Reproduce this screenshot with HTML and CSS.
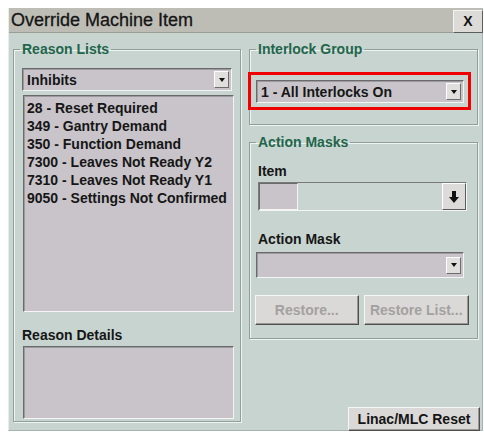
FILE: index.html
```html
<!DOCTYPE html>
<html lang="en">
<head>
<meta charset="utf-8">
<title>Override Machine Item</title>
<link rel="stylesheet" href="styles.css">
</head>
<body>
<div class="window">
  <div class="titlebar">
    <span class="title">Override Machine Item</span>
    <button class="close" type="button">X</button>
  </div>
  <div class="content">
    <fieldset class="group group-reasons">
      <legend>Reason Lists</legend>
      <div class="combo combo-inhibits">
        <span class="combo-value">Inhibits</span>
        <span class="drop"><span class="tri"></span></span>
      </div>
      <ul class="listbox">
        <li>28 - Reset Required</li>
        <li>349 - Gantry Demand</li>
        <li>350 - Function Demand</li>
        <li>7300 - Leaves Not Ready Y2</li>
        <li>7310 - Leaves Not Ready Y1</li>
        <li>9050 - Settings Not Confirmed</li>
      </ul>
      <div class="field-label details-label">Reason Details</div>
      <div class="details"></div>
    </fieldset>

    <div class="side">
      <fieldset class="group group-interlock">
        <legend>Interlock Group</legend>
        <div class="highlight">
          <div class="combo combo-interlock">
            <span class="combo-value">1 - All Interlocks On</span>
            <span class="drop"><span class="tri"></span></span>
          </div>
        </div>
      </fieldset>

      <fieldset class="group group-masks">
        <legend>Action Masks</legend>
        <div class="field-label item-label">Item</div>
        <div class="picker">
          <span class="picker-swatch"></span>
          <span class="picker-btn">
            <svg width="12" height="14" viewBox="0 0 12 14"><path d="M4 1h4v6h3l-5 6-5-6h3z" fill="#111"/></svg>
          </span>
        </div>
        <div class="field-label mask-label">Action Mask</div>
        <div class="combo combo-mask">
          <span class="combo-value"></span>
          <span class="drop"><span class="tri"></span></span>
        </div>
        <div class="btn-row">
          <button class="btn btn-disabled btn-restore" type="button">Restore...</button>
          <button class="btn btn-disabled btn-restore-list" type="button">Restore List...</button>
        </div>
      </fieldset>

      <button class="btn btn-reset" type="button">Linac/MLC Reset</button>
    </div>
  </div>
</div>
</body>
</html>
```

FILE: styles.css
```css
* { box-sizing: border-box; }

html, body {
  margin: 0;
  padding: 0;
  background: #ffffff;
}

body {
  font-family: "Liberation Sans", Arial, sans-serif;
  font-weight: bold;
  font-size: 14px;
  color: #161616;
}

.window {
  width: 475px;
  height: 423px;
  margin: 8px 0 0 8px;
  background: #c8d4d0;
  border-left: 1px solid #e6eeea;
  border-bottom: 1px solid #a7b3af;
  border-right: 1px solid #a7b3af;
  display: flex;
  flex-direction: column;
}

.titlebar {
  height: 25px;
  background: #bdbdb6;
  border-bottom: 1px solid #9c9c96;
  display: flex;
  align-items: center;
  justify-content: space-between;
  padding-left: 2px;
}

.title {
  font-weight: normal;
  font-size: 18px;
  color: #141414;
  -webkit-text-stroke: 0.3px #141414;
}

.close {
  width: 30px;
  height: 23px;
  margin-top: 2px;
  margin-right: -1px;
  padding: 0;
  font-family: "Liberation Sans", Arial, sans-serif;
  font-weight: bold;
  font-size: 14px;
  color: #111;
  background: #dcdbd8;
  border: 1px solid;
  border-color: #f4f4f2 #5c5c5a #5c5c5a #f4f4f2;
}

.content {
  flex: 1;
  display: flex;
  gap: 8px;
  padding: 8px 4px 0 4px;
}

/* etched group boxes */
.group {
  margin: 0;
  border: 1px solid #929e9a;
  box-shadow: inset 1px 1px 0 #eef4f2, 1px 1px 0 #eef4f2;
  min-width: 0;
}

.group legend {
  padding: 0 2px;
  margin-left: -2px;
  color: #1f664b;
  font-size: 14px;
  line-height: 16px;
}

.group-reasons {
  width: 229px;
  height: 381px;
  padding: 11px 7px 0 8px;
}

.side {
  width: 229px;
  display: flex;
  flex-direction: column;
}

.group-interlock {
  height: 84px;
  padding: 15px 5px 0 0;
}

.group-interlock legend { margin-left: 6px; }

.group-masks {
  margin-top: 9px;
  height: 205px;
  padding: 13px 8px 0 8px;
}

/* sunken drop-down fields */
.combo {
  position: relative;
  height: 23px;
  background: #c8c4ca;
  border: 1px solid;
  border-color: #6a6a6a #f4f4f4 #f4f4f4 #6a6a6a;
  box-shadow: inset 1px 1px 0 #9c9a9e;
  display: flex;
  align-items: center;
  justify-content: space-between;
  padding-left: 4px;
}

.combo-value {
  white-space: nowrap;
}

.drop {
  width: 15px;
  height: 17px;
  margin-right: 2px;
  background: #e0dfdd;
  border: 1px solid;
  border-color: #ffffff #6c6c6c #6c6c6c #ffffff;
  display: flex;
  align-items: center;
  justify-content: center;
}

.tri {
  width: 0;
  height: 0;
  border-left: 3px solid transparent;
  border-right: 3px solid transparent;
  border-top: 4px solid #111;
}

.combo-inhibits { width: 210px; }

.listbox {
  list-style: none;
  margin: 4px 0 0 1px;
  padding: 3px 0 0 3px;
  width: 211px;
  height: 217px;
  background: #c8c4ca;
  border: 1px solid;
  border-color: #6a6a6a #f4f4f4 #f4f4f4 #6a6a6a;
  box-shadow: inset 1px 1px 0 #9c9a9e;
}

.listbox li {
  line-height: 18px;
  white-space: nowrap;
}

.field-label {
  line-height: 16px;
  color: #161616;
}

.details-label { margin-top: 15px; }

.details {
  margin: 3px 0 0 1px;
  width: 211px;
  height: 73px;
  background: #c8c4ca;
  border: 1px solid;
  border-color: #6a6a6a #f4f4f4 #f4f4f4 #6a6a6a;
  box-shadow: inset 1px 1px 0 #9c9a9e;
}

/* red highlight frame round the interlock selector */
.highlight {
  width: 223px;
  margin-left: -2px;
  border: 3px solid #f00000;
  padding: 5px 3px 4px 5px;
}

.combo-interlock { width: 208px; }

.item-label { margin-top: 0; }

.picker {
  margin-top: 3px;
  width: 209px;
  height: 29px;
  display: flex;
  border: 1px solid;
  border-color: #7a7a7a #f4f4f4 #f4f4f4 #7a7a7a;
  background: #c9d5d1;
}

.picker-swatch {
  width: 39px;
  height: 100%;
  background: #c8c4ca;
  border: 1px solid;
  border-color: #6a6a6a #f4f4f4 #f4f4f4 #6a6a6a;
}

.picker-btn {
  margin-left: auto;
  width: 24px;
  height: 100%;
  background: #dddbd9;
  border: 1px solid;
  border-color: #ffffff #5c5c5a #5c5c5a #ffffff;
  display: flex;
  align-items: center;
  justify-content: center;
}

.mask-label { margin-top: 20px; }

.combo-mask {
  margin-top: 5px;
  margin-left: -2px;
  width: 208px;
  height: 26px;
}

.btn-row {
  display: flex;
  gap: 5px;
  margin-top: 17px;
  margin-left: -3px;
}

.btn {
  font-family: "Liberation Sans", Arial, sans-serif;
  font-weight: bold;
  font-size: 14px;
  padding: 0;
  background: #dbd9d7;
  border: 1px solid;
  border-color: #f6f6f4 #4e4e4c #4e4e4c #f6f6f4;
  box-shadow: inset -1px -1px 0 #9a9896;
  color: #141414;
}

.btn-disabled { color: #a3a1a0; }

.btn-restore { width: 104px; height: 30px; }
.btn-restore-list { width: 106px; height: 30px; }

.btn-reset {
  margin-top: auto;
  margin-bottom: -1px;
  align-self: flex-end;
  margin-right: -2px;
  width: 132px;
  height: 24px;
}
```
